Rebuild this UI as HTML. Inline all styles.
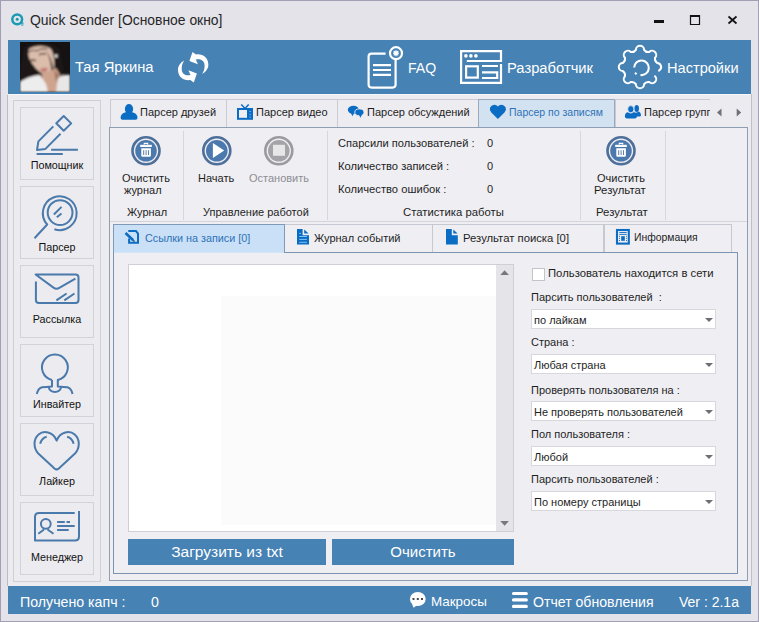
<!DOCTYPE html>
<html><head><meta charset="utf-8">
<style>
*{margin:0;padding:0;box-sizing:border-box}
html,body{width:759px;height:622px;overflow:hidden;background:#e4e3ea;font-family:"Liberation Sans",sans-serif;color:#1e1e1e}
.a{position:absolute}
.t{position:absolute;white-space:nowrap;line-height:1}
.hw{color:#fff;font-size:14.75px}
.sb{position:absolute;left:20px;width:74px;height:73px;border:1px solid #d2d2d9}
.sl{position:absolute;left:20px;width:74px;text-align:center;font-size:10.75px;color:#111;white-space:nowrap;line-height:1}
.tab{position:absolute;top:99px;height:29px;border:1px solid #c9cad3;border-bottom:none;background:#edecf1}
.tx{position:absolute;font-size:11px;white-space:nowrap;line-height:1}
.rib{font-size:11px}
.itab{position:absolute;top:224px;height:29px;border:1px solid #c6c8d2;border-bottom:none;background:#efeef3}
.sel{position:absolute;left:531px;width:185px;height:20px;background:#fff;border:1px solid #d7d7dd}
.sel span{position:absolute;left:2px;top:5px;white-space:nowrap;font-size:11px;line-height:1}
.sel i{position:absolute;left:173px;top:8px;width:0;height:0;border-left:4px solid transparent;border-right:4px solid transparent;border-top:4px solid #6e6e74}
.fl{position:absolute;left:531px;font-size:11px;white-space:nowrap;line-height:1}
</style></head><body>
<!-- window border -->
<div class="a" style="left:8px;top:94px;width:743px;height:492px;background:#ecebf0"></div>
<div class="a" style="left:0;top:0;width:759px;height:622px;border:1px solid #a29fb2"></div>
<div class="t" style="left:30px;top:14px;font-size:13.9px;color:#262626">Quick Sender [Основное окно]</div>

<!-- header -->
<div class="a" style="left:8px;top:40px;width:743px;height:54px;background:#4682b4"></div>
<div class="a" style="left:8px;top:94px;width:743px;height:1px;background:#f6f8fb"></div>
<div class="t hw" style="left:75px;top:60px">Тая Яркина</div>
<div class="t hw" style="left:408px;top:61px;font-size:14.1px">FAQ</div>
<div class="t hw" style="left:507px;top:61px">Разработчик</div>
<div class="t hw" style="left:667px;top:61px;font-size:14.6px">Настройки</div>

<!-- frames -->
<div class="a" style="left:7px;top:95px;width:1px;height:491px;background:#bcbcc4"></div>
<div class="a" style="left:751px;top:94px;width:1px;height:492px;background:#bfbfc8"></div>
<div class="a" style="left:13px;top:100px;width:88px;height:482px;border:1px solid #cfcfd6"></div>

<!-- sidebar -->
<div class="sb" style="top:107px"></div><div class="sl" style="top:160px">Помощник</div>
<div class="sb" style="top:186px"></div><div class="sl" style="top:242px">Парсер</div>
<div class="sb" style="top:265px"></div><div class="sl" style="top:314px">Рассылка</div>
<div class="sb" style="top:344px"></div><div class="sl" style="top:399px">Инвайтер</div>
<div class="sb" style="top:423px"></div><div class="sl" style="top:476px">Лайкер</div>
<div class="sb" style="top:502px"></div><div class="sl" style="top:552px">Менеджер</div>

<!-- top tabs -->
<div class="tab" style="left:110px;width:117px"><div class="tx" style="left:29px;top:7px">Парсер друзей</div></div>
<div class="tab" style="left:226px;width:112px"><div class="tx" style="left:29px;top:7px">Парсер видео</div></div>
<div class="tab" style="left:337px;width:142px"><div class="tx" style="left:29px;top:7px">Парсер обсуждений</div></div>
<div class="tab" style="left:615px;width:95px;border-right:none;overflow:hidden"><div class="tx" style="left:28px;top:7px">Парсер групп</div></div>
<div class="tab" style="left:478px;width:137px;height:29px;background:#d3e2f1;border-color:#9aaabd"><div class="tx" style="left:30px;top:7px;color:#2f72b8;font-size:10.5px">Парсер по записям</div></div>

<!-- ribbon -->
<div class="a" style="left:109px;top:127px;width:639px;height:454px;border:1px solid #8e9fb3;background:#efeef3"></div>
<div class="a" style="left:110px;top:221px;width:637px;height:1px;background:#d3d3da"></div>
<div class="a" style="left:183px;top:131px;width:1px;height:89px;background:#d6d6dc"></div>
<div class="a" style="left:327px;top:131px;width:1px;height:89px;background:#d6d6dc"></div>
<div class="a" style="left:580px;top:131px;width:1px;height:89px;background:#d6d6dc"></div>
<div class="a" style="left:665px;top:131px;width:1px;height:89px;background:#d6d6dc"></div>

<div class="t rib" style="left:122px;top:173px">Очистить</div>
<div class="t rib" style="left:124px;top:185px">журнал</div>
<div class="t rib" style="left:127px;top:207px">Журнал</div>
<div class="t rib" style="left:198px;top:173px">Начать</div>
<div class="t rib" style="left:249px;top:173px;color:#8d8d93">Остановить</div>
<div class="t rib" style="left:203px;top:207px">Управление работой</div>
<div class="t rib" style="left:338px;top:138px;font-size:11.1px">Спарсили пользователей :</div>
<div class="t rib" style="left:487px;top:138px">0</div>
<div class="t rib" style="left:338px;top:161px;font-size:11.2px">Количество записей :</div>
<div class="t rib" style="left:487px;top:161px">0</div>
<div class="t rib" style="left:338px;top:184px;font-size:11.2px">Количество ошибок :</div>
<div class="t rib" style="left:487px;top:184px">0</div>
<div class="t rib" style="left:403px;top:207px;font-size:11.3px">Статистика работы</div>
<div class="t rib" style="left:597px;top:173px">Очистить</div>
<div class="t rib" style="left:594px;top:185px;font-size:11.4px">Результат</div>
<div class="t rib" style="left:596px;top:207px;font-size:11.4px">Результат</div>

<!-- inner tabs -->
<div class="itab" style="left:284px;width:149px"><div class="tx" style="left:29px;top:8px">Журнал событий</div></div>
<div class="itab" style="left:432px;width:172px"><div class="tx" style="left:30px;top:8px;font-size:11.3px">Результат поиска [0]</div></div>
<div class="itab" style="left:604px;width:128px"><div class="tx" style="left:29px;top:8px;font-size:10.4px">Информация</div></div>
<div class="itab" style="left:113px;width:172px;background:#c9e0f6;border-color:#7f99b8;height:29px"><div class="tx" style="left:31px;top:8px;color:#2f72b8;font-size:10.8px">Ссылки на записи [0]</div></div>

<!-- content -->
<div class="a" style="left:113px;top:252px;width:625px;height:322px;border:1px solid #7b93ae;background:#efeef3"></div>
<div class="a" style="left:114px;top:252px;width:170px;height:1px;background:#d3e6f8"></div>
<div class="a" style="left:128px;top:264px;width:386px;height:268px;border:1px solid #cfcfd6;background:#fff"></div>
<div class="a" style="left:221px;top:296px;width:275px;height:229px;background:#fbfbfc"></div>
<div class="a" style="left:496px;top:265px;width:17px;height:266px;background:#e4e4e9"></div>

<div class="a" style="left:128px;top:539px;width:198px;height:26px;background:#4682b4"></div>
<div class="t" style="left:128px;top:544px;width:198px;text-align:center;color:#fff;font-size:15.5px">Загрузить из txt</div>
<div class="a" style="left:332px;top:539px;width:182px;height:26px;background:#4682b4"></div>
<div class="t" style="left:332px;top:544px;width:182px;text-align:center;color:#fff;font-size:15px">Очистить</div>

<div class="a" style="left:532px;top:268px;width:13px;height:13px;background:#fff;border:1px solid #c3c3ca"></div>
<div class="fl" style="left:548px;top:268px;font-size:11.3px">Пользователь находится в сети</div>
<div class="fl" style="top:292px">Парсить пользователей &nbsp;:</div>
<div class="sel" style="top:309px"><span>по лайкам</span><i></i></div>
<div class="fl" style="top:337px">Страна :</div>
<div class="sel" style="top:354px"><span>Любая страна</span><i></i></div>
<div class="fl" style="top:385px">Проверять пользователя на :</div>
<div class="sel" style="top:401px"><span>Не проверять пользователей</span><i></i></div>
<div class="fl" style="top:429px">Пол пользователя :</div>
<div class="sel" style="top:446px"><span>Любой</span><i></i></div>
<div class="fl" style="top:474px">Парсить пользователей :</div>
<div class="sel" style="top:491px"><span>По номеру страницы</span><i></i></div>

<!-- status -->
<div class="a" style="left:8px;top:586px;width:743px;height:28px;background:#4682b4"></div>
<div class="t hw" style="left:20px;top:595px;font-size:14.2px">Получено капч :</div>
<div class="t hw" style="left:151px;top:595px;font-size:14.2px">0</div>
<div class="t hw" style="left:431px;top:595px;font-size:13.4px">Макросы</div>
<div class="t hw" style="left:533px;top:595px;font-size:14.1px">Отчет обновления</div>
<div class="t hw" style="left:679px;top:595px;font-size:14px">Ver : 2.1a</div>

<!-- ICON OVERLAY -->
<svg class="a" style="left:0;top:0" width="759" height="622" viewBox="0 0 759 622">
<defs><filter id="bl" x="-10%" y="-10%" width="120%" height="120%"><feGaussianBlur stdDeviation="1.3"/></filter>
<clipPath id="av"><rect x="20" y="42" width="50" height="50"/></clipPath></defs>
<!-- title icon -->
<g fill="none" stroke="#1a9ab3">
<circle cx="17.2" cy="19.3" r="4.9" stroke-width="2.5"/>
</g>
<circle cx="17.2" cy="19.3" r="1.5" fill="#1a9ab3"/>
<path d="M20.5 23.2h3M21 25h2.5" stroke="#1a9ab3" stroke-width="1.2"/>
<!-- window controls -->
<rect x="654" y="20" width="10" height="3" fill="#111"/>
<path d="M690.5 15.5h9v9h-9z" fill="none" stroke="#111" stroke-width="1.2"/><rect x="690" y="15" width="10" height="2" fill="#111"/>
<path d="M728.5 16.5l8 7M736.5 16.5l-8 7" stroke="#111" stroke-width="1.7"/>

<!-- avatar -->
<g clip-path="url(#av)"><g transform="translate(20 42)">
<rect width="50" height="50" fill="#141212"/>
<g filter="url(#bl)">
<path d="M4 6 C10 -2 34 -2 40 8 L44 30 L38 50 L0 50 L0 30 Z" fill="#1f1816"/>
<path d="M9 7 C14 3 26 3 31 7 C34 12 35 22 34 28 C32 33 27 34 23 32 C18 29 13 24 10 18 C8 14 8 10 9 7Z" fill="#dcbdac"/>
<path d="M26 8 C30 14 33 22 34 30 L31 34 C32 26 30 16 26 8Z" fill="#3a2a24"/>
<path d="M22 30 C27 30 33 28 36 26 L42 36 L40 50 L24 50 L22 38 Z" fill="#cfa48f"/>
<path d="M34 28 L40 34 L36 40 Z" fill="#a07865"/>
<path d="M20 27 Q24 25 28 26 Q27 30 23 30 Q20 29 20 27Z" fill="#c27d72"/>
<path d="M10 19 Q13 17 16 19 M19 13 Q22 11 26 12" stroke="#3b2a25" stroke-width="1.4" fill="none"/>
<path d="M8 10 Q14 7 18 9 M18 8 Q23 6 27 7" stroke="#2e221f" stroke-width="1" fill="none"/>
<path d="M0 50 L0 40 C6 36 14 33 20 33 L26 42 L28 50 Z" fill="#ededed"/>
<path d="M38 36 C42 33 46 32 50 33 L50 50 L36 50 Z" fill="#e8e6e6"/>
<circle cx="36" cy="14" r="1.7" fill="#e8e8e8"/>
</g></g></g>

<!-- sync -->
<g fill="#fff">
<path d="M192.5 52 L189.4 60.9 L197.9 64.3 L195.8 59.6 C200.5 58.2 204.5 60.5 204.6 65.5 C204.7 68.7 203.8 71.3 202.1 74 C206.5 71.5 208.6 68 208.3 64 C208 57.5 203 53.6 196 54.4 Z"/>
<path d="M193.8 82.5 L196.9 73.6 L188.4 70.2 L190.5 74.9 C185.8 76.3 181.8 74 181.7 69 C181.6 65.8 182.5 63.2 184.2 60.5 C179.8 63 177.7 66.5 178 70.5 C178.3 77 183.3 80.9 190.3 80.1 Z"/>
</g>

<!-- FAQ -->
<g fill="none" stroke="#fff" stroke-width="2.2">
<path d="M385.6 53.6 H371.6 Q368.6 53.6 368.6 56.6 V84.6 Q368.6 87.6 371.6 87.6 H392.6 Q395.6 87.6 395.6 84.6 V59.8"/>
<circle cx="396" cy="53.2" r="6"/>
<path d="M373 65.2H391M373 70H391M373 74.9H391"/>
</g>
<path d="M393.8 51l4.4 4.4M398.2 51l-4.4 4.4M396 50.2v6M393 53.2h6" stroke="#fff" stroke-width="1.3"/>

<!-- dev -->
<g fill="none" stroke="#fff" stroke-width="2.2">
<path d="M466.8 61H501V51.1H461.1V82.8H501V64"/>
<rect x="466.1" y="66.3" width="11.7" height="11.3"/>
<path d="M482 66H498M482 72.3H497.2V78H482"/>
</g>
<circle cx="465.9" cy="55.9" r="1.8" fill="#fff"/><circle cx="470.9" cy="55.9" r="1.8" fill="#fff"/><circle cx="475.9" cy="55.9" r="1.8" fill="#fff"/>

<!-- gear -->
<path d="M655.02 76.22A4.1 4.1 0 0 1 649.22 82.02A5.0 5.0 0 0 0 644.10 84.14A4.1 4.1 0 0 1 635.90 84.14A5.0 5.0 0 0 0 630.78 82.02A4.1 4.1 0 0 1 624.98 76.22A5.0 5.0 0 0 0 622.86 71.10A4.1 4.1 0 0 1 622.86 62.90A5.0 5.0 0 0 0 624.98 57.78A4.1 4.1 0 0 1 630.78 51.98A5.0 5.0 0 0 0 635.90 49.86A4.1 4.1 0 0 1 644.10 49.86A5.0 5.0 0 0 0 649.22 51.98A4.1 4.1 0 0 1 655.02 57.78A5.0 5.0 0 0 0 657.14 62.90A4.1 4.1 0 0 1 658.97 70.60" fill="none" stroke="#fff" stroke-width="2" stroke-linejoin="round" stroke-linecap="round"/>
<path d="M634.2 67.5 A7.3 7.3 0 1 1 640.5 75" fill="none" stroke="#fff" stroke-width="2.1"/>
<path d="M635 72.8l1.6 1.4" stroke="#fff" stroke-width="2"/>

<!-- sidebar icons -->
<g fill="none" stroke="#4a7aab" stroke-width="2" stroke-linejoin="round">
<path d="M63.7 116 L71.2 123.4 L63.7 130.8 L56.3 123.3 Z"/>
<path d="M53.3 126.4 L38.4 141.4 L37 150 L45.5 148.9 L60.5 133.7"/>
<path d="M51.1 149.8H77.9M36.6 154H62.8"/>
<!-- magnifier -->
<circle cx="60.1" cy="212.6" r="12.4"/>
<path d="M54.4 229.2 A16.9 16.9 0 1 0 47.2 224.5 L34.5 238.2"/>
<path d="M61.5 206.9 L53.9 214.5 M61.5 213.5 L56.8 217.3"/>
<!-- envelope -->
<path d="M35.9 281.4 V300 Q35.9 303 38.9 303 H75.5 Q78.5 303 78.5 300 V277.5 Q78.5 274.5 75.5 274.5 H35.6 L53.5 287.6 Q56.4 289.6 59.3 287.8 L75.4 278.7"/>
<path d="M56.4 300.4 L66.6 293.5 M64.3 300.4 L74.5 293.5"/>
<!-- person -->
<path d="M52 380 A12.9 12.9 0 1 1 57.8 380 V386.4 Q64 386.8 67.5 387.2 Q71.5 388.5 72.5 394 M52 380 V386.4 Q46 386.8 42 387.2 Q38 388.5 36.8 394"/>
<path d="M48.5 387 Q50 392 54.9 392 Q59.8 392 61.3 387"/>
<!-- heart -->
<path d="M56.65 440.6 C53 431.5 43.5 430.3 38.6 434.4 C33 439.3 33.4 448 38.3 453.6 L54.5 468.5 Q56.65 470.3 58.8 468.5 L75 453.6 C79.9 448 80.3 439.3 74.7 434.4 C69.8 430.3 60.3 431.5 56.65 440.6 Z"/>
<path d="M40.2 443.8 Q41.5 438 46.7 436.7 M67.1 436.7 Q72.3 438 73.6 443.8"/>
<!-- id card -->
<path d="M74.7 512.9 H39 Q35 512.9 35 516.9 V540.6 H75 Q79 540.6 79 536.6 V511"/>
<circle cx="45.8" cy="523.8" r="4.9"/>
<path d="M43.4 528.6 V530 L38.3 533.8 M48.2 528.6 V530 L53.5 533.8"/>
<path d="M57.1 522H64.8M66.5 522H70M57.1 525.9H74.7M57.1 530H68.7"/>
</g>

<!-- top tab icons -->
<g fill="#0b6cc4">
<ellipse cx="129" cy="109" rx="4.1" ry="5"/>
<path d="M125 112.6 Q129 110.5 133 112.6 Q137.5 114 137.5 118 Q137.5 119.8 135.5 119.8 H122.5 Q120.6 119.8 120.6 118 Q120.6 114 125 112.6Z"/>
<rect x="237" y="108" width="16" height="11.8"/>
<path d="M241.3 104.4L245 108.5L248.7 104.4" fill="none" stroke="#0b6cc4" stroke-width="1.5"/>
<ellipse cx="353.4" cy="109.8" rx="5.6" ry="4"/>
<path d="M350.8 112.5 L352.3 116.3 L354.5 112.5Z"/>
<ellipse cx="359.4" cy="112.3" rx="4.6" ry="3.4" stroke="#efeef3" stroke-width="0.9"/>
<path d="M358.8 114.5 L360.4 117.7 L362 114.5Z"/>
<path d="M497.9 119 L491.3 112.6 Q489 110 490.2 107.2 Q491.8 104.6 494.5 104.7 Q496.6 104.8 497.9 106.5 Q499.2 104.8 501.3 104.7 Q504 104.6 505.6 107.2 Q506.8 110 504.5 112.6 Z"/>
<ellipse cx="636.7" cy="108.5" rx="2.3" ry="3.5"/>
<path d="M633.5 112.2 Q636.5 113.5 639 111.6 Q641 113 641 115.2 Q641 116.6 639.5 116.6 H634Z"/>
<ellipse cx="630.8" cy="109.2" rx="3.1" ry="3.6" stroke="#efeef3" stroke-width="0.8"/>
<path d="M627.5 112.3 Q630.8 114.5 634.1 112.3 Q637 113.2 636.9 116.5 Q636.9 118.6 634.8 118.6 H627 Q624.9 118.6 624.9 116.5 Q624.8 113.2 627.5 112.3Z"/>
</g>
<rect x="239" y="110" width="8" height="7.8" fill="#efeef3"/>
<path d="M249.3 111.5h1.6M249.3 114.4h1.6M249.3 117h1.6" stroke="#6fb0ec" stroke-width="1"/>
<!-- tab arrows -->
<path d="M721.5 108.5 L717 112.5 L721.5 116.5Z" fill="#707078"/>
<path d="M736.7 108.5 L741.2 112.5 L736.7 116.5Z" fill="#707078"/>

<!-- ribbon icons -->
<g id="trash">
<circle cx="146" cy="150.8" r="13.5" fill="none" stroke="#4d6f99" stroke-width="2.6"/>
<circle cx="146" cy="150.8" r="10.8" fill="#4b79ad"/>
<path d="M140.2 145.9H151.8" stroke="#fff" stroke-width="2.2"/>
<path d="M144.3 144.6V143.4H147.7V144.6" fill="none" stroke="#fff" stroke-width="1.2"/>
<path d="M141.3 148.2H150.9V155.5Q150.9 156.8 149.6 156.8H142.6Q141.3 156.8 141.3 155.5Z" fill="#fff"/>
<path d="M143.7 150.2V155M146.1 150.2V155M148.5 150.2V155" stroke="#5d7ea6" stroke-width="1"/>
</g>
<use href="#trash" x="475" y="0"/>
<circle cx="216.8" cy="150.8" r="13.5" fill="none" stroke="#4d6f99" stroke-width="2.6"/>
<circle cx="216.8" cy="150.8" r="10.8" fill="#4b79ad"/>
<path d="M212.9 143 L224.2 150.6 L212.9 158Z" fill="#fff"/>
<circle cx="278.8" cy="150.8" r="13.5" fill="none" stroke="#9b9b9f" stroke-width="2.6"/>
<circle cx="278.8" cy="150.8" r="10.8" fill="#a4a4a8"/>
<rect x="273" y="144.8" width="12" height="11" fill="#e6e6e8"/>

<!-- inner tab icons -->
<g fill="none" stroke="#0b6cc4" stroke-width="2">
<path d="M128.3 231.1H136L138 233.6V242.7H129.1V238.5"/>
</g>
<path d="M125.5 233 L133.2 240.2" stroke="#0b6cc4" stroke-width="2.6"/>
<path d="M133.2 240.2 L134.5 241.5" stroke="#2e4f70" stroke-width="1.5"/>
<path d="M297 229H302.6V235.2H309V244.6H297Z" fill="#0b6cc4"/>
<path d="M304.2 229.5L308.6 233.6H304.2Z" fill="#0b6cc4"/>
<path d="M299.2 233.4H301M299.2 236.5H306.9M299.2 239.4H306.9M299.2 242.3H306.9" stroke="#7ec5f5" stroke-width="1"/>
<path d="M446 229H451.8V235.2H457.8V244.6H446Z" fill="#0b6cc4"/>
<path d="M453.3 229.5L457.6 233.6H453.3Z" fill="#0b6cc4"/>
<rect x="617" y="230" width="11.8" height="13.6" fill="none" stroke="#0b6cc4" stroke-width="2.1"/>
<path d="M619.3 232.5H626.7M619.3 234.4H626.7" stroke="#0b6cc4" stroke-width="0.9"/>
<rect x="621.2" y="236.2" width="3.6" height="4.6" fill="#0b6cc4"/>
<path d="M619.5 235.8v1M619.5 237.9v1M619.5 240v1M626.5 235.8v1M626.5 237.9v1M626.5 240v1" stroke="#4a6fa0" stroke-width="1"/>

<!-- scrollbar arrows -->
<path d="M500.3 275 L504.6 270.3 L508.9 275Z" fill="#77777c"/>
<path d="M500.3 521 L504.6 525.7 L508.9 521Z" fill="#77777c"/>

<!-- status icons -->
<ellipse cx="417.8" cy="599" rx="7.9" ry="7" fill="#fff"/>
<path d="M412 603.5 L413.5 607.8 L417.5 605Z" fill="#fff"/>
<rect x="412.5" y="598" width="2" height="2" fill="#4a4a4e"/><rect x="416.8" y="598" width="2" height="2" fill="#4a4a4e"/><rect x="421" y="598" width="2" height="2" fill="#4a4a4e"/>
<path d="M513.5 593.5H526.3M513.5 599.9H526.3M513.5 606.4H526.3" stroke="#fff" stroke-width="3.2" stroke-linecap="round"/>
</svg>
</body></html>
